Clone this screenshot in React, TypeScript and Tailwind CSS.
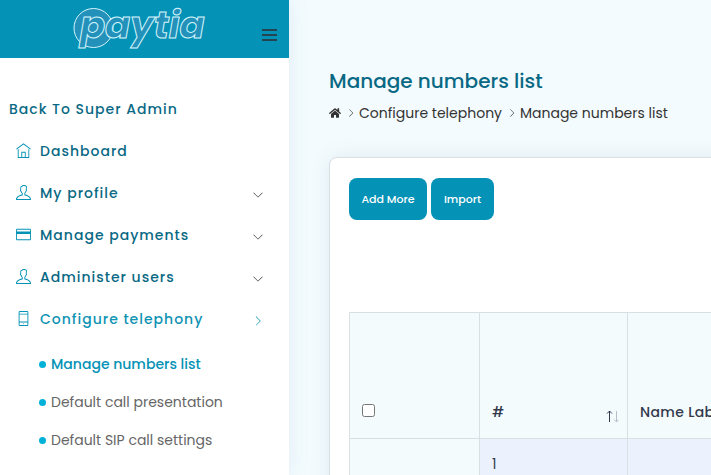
import type { IconType } from "react-icons";
import { FaHome } from "react-icons/fa";
import {
  TfiAngleDown,
  TfiAngleRight,
  TfiCreditCard,
  TfiHome,
  TfiMobile,
  TfiUser,
} from "react-icons/tfi";

interface MenuItem {
  label: string;
  icon: IconType;
  expandable?: boolean;
  children?: string[];
}

const menu: MenuItem[] = [
  { label: "Dashboard", icon: TfiHome },
  { label: "My profile", icon: TfiUser, expandable: true },
  { label: "Manage payments", icon: TfiCreditCard, expandable: true },
  { label: "Administer users", icon: TfiUser, expandable: true },
  {
    label: "Configure telephony",
    icon: TfiMobile,
    children: [
      "Manage numbers list",
      "Default call presentation",
      "Default SIP call settings",
    ],
  },
];

const Logo = () => (
  <svg
    className="overflow-visible"
    width="144"
    height="44"
    viewBox="0 0 144 44"
    role="img"
    aria-label="paytia"
  >
    <g fill="#2491ba" stroke="#d5f5fc" strokeWidth="1">
      <circle cx="21.500" cy="21" r="19.500" />
      <text
        x="8"
        y="31"
        fontFamily="Poppins, 'Open Sans', sans-serif"
        fontSize="37"
        fontWeight="700"
        fontStyle="italic"
      >
        paytia
      </text>
    </g>
  </svg>
);

const Sidebar = () => (
  <aside className="w-[289px] shrink-0 bg-white shadow-[0_0_20px_rgba(90,140,170,0.12)]">
    <div className="flex h-[58px] items-center justify-between bg-[#0492b6] pr-3 pl-[72px]">
      <a href="#home">
        <Logo />
      </a>
      <button aria-label="Toggle menu" className="mt-3 p-0 text-[#234450]">
        <svg width="15" height="12" viewBox="0 0 15 12" fill="currentColor">
          <path d="M0 0h15v2H0zM0 5h15v2H0zM0 10h15v2H0z" />
        </svg>
      </button>
    </div>

    <nav className="pt-[30px] text-[#096984]">
      <a
        href="#admin"
        className="flex h-[42px] items-center pl-[9px] text-sm font-medium tracking-[1px]"
      >
        Back To Super Admin
      </a>
      <ul>
        {menu.map((item) => (
          <li key={item.label}>
            <a
              href="#menu"
              className={`flex h-[42px] items-center pr-[26px] pl-4 text-sm font-medium tracking-[1px] ${
                item.children ? "text-[#0e93b3]" : ""
              }`}
            >
              <item.icon className="mr-[9px] mb-0.5 size-[15px] text-[#0492b6]" />
              <span className="flex-1">{item.label}</span>
              {item.expandable && <TfiAngleDown className="mt-1 size-2.5 text-[#333]" />}
              {item.children && <TfiAngleRight className="mt-1 size-2.5 text-[#0492b6]" />}
            </a>
            {item.children && (
              <ul className="pt-[5px]">
                {item.children.map((child, i) => (
                  <li key={child}>
                    <a
                      href="#page"
                      className={`flex h-[38px] items-center gap-1 pl-[39px] text-sm ${
                        i === 0 ? "font-medium text-[#0492b6]" : "text-[#666]"
                      }`}
                    >
                      <span className="mr-px size-[7px] rounded-full bg-[#03b1d8]" />
                      {child}
                    </a>
                  </li>
                ))}
              </ul>
            )}
          </li>
        ))}
      </ul>
    </nav>
  </aside>
);

const SortArrows = () => (
  <svg className="-mr-1 -mb-1" width="14" height="18" viewBox="0 0 14 18" fill="none">
    <path d="M4.500 14V3M2 5.500L4.500 3L7 5.500" stroke="#333a4d" />
    <path d="M11.500 3V14M9 11.500L11.500 14L14 11.500" stroke="#b9bfc8" />
  </svg>
);

const NumbersTable = () => (
  <table className="border-collapse text-sm text-[#33394d]">
    <thead>
      <tr className="h-[126px] bg-[#f4fbfd] text-left align-bottom">
        <th className="w-[130px] border border-[#d9dfe2] px-3 pb-[21px]">
          <input
            type="checkbox"
            aria-label="Select all numbers"
            className="block size-[13px]"
          />
        </th>
        <th className="w-[148px] border border-[#d9dfe2] px-3 pb-4 font-medium">
          <div className="flex items-end justify-between">
            #
            <SortArrows />
          </div>
        </th>
        <th className="w-[200px] border border-[#d9dfe2] px-3 pb-4 font-medium tracking-wide">
          Name Label
        </th>
      </tr>
    </thead>
    <tbody>
      <tr className="h-[51px] bg-[#ebf2fd]">
        <td className="border border-[#d9dfe2] bg-[#f4fbfd] px-3" />
        <td className="border border-[#d9dfe2] px-3">1</td>
        <td className="border border-[#d9dfe2] px-3" />
      </tr>
    </tbody>
  </table>
);

export default function App() {
  return (
    <div className="flex h-screen overflow-hidden bg-[#f3fbfe] font-['Poppins','Inter',sans-serif]">
      <Sidebar />

      <main className="min-w-0 flex-1 pt-[66px] pl-10">
        <h1 className="text-xl leading-[30px] font-medium text-[#096984]">
          Manage numbers list
        </h1>
        <ol className="mt-[5px] flex items-center text-sm leading-6 text-[#333]">
          <li>
            <a href="#home" aria-label="Home">
              <FaHome className="size-3" />
            </a>
          </li>
          <li className="flex items-center">
            <TfiAngleRight className="mr-1 ml-1.5 size-2" />
            <a href="#telephony">Configure telephony</a>
          </li>
          <li className="flex items-center">
            <TfiAngleRight className="mr-1 ml-1.5 size-2" />
            Manage numbers list
          </li>
        </ol>

        <section className="mt-8 w-max rounded-lg border border-[#d9dfe2] bg-white px-[19px] py-5 shadow-[0_0_20px_rgba(90,120,140,0.12)]">
          <div className="mb-[92px] flex gap-1 text-[11px] font-medium text-white">
            <button className="h-[42px] w-[78px] rounded-lg bg-[#0492b6]">
              Add More
            </button>
            <button className="h-[42px] w-[63px] rounded-lg bg-[#0492b6]">
              Import
            </button>
          </div>
          <NumbersTable />
        </section>
      </main>
    </div>
  );
}
